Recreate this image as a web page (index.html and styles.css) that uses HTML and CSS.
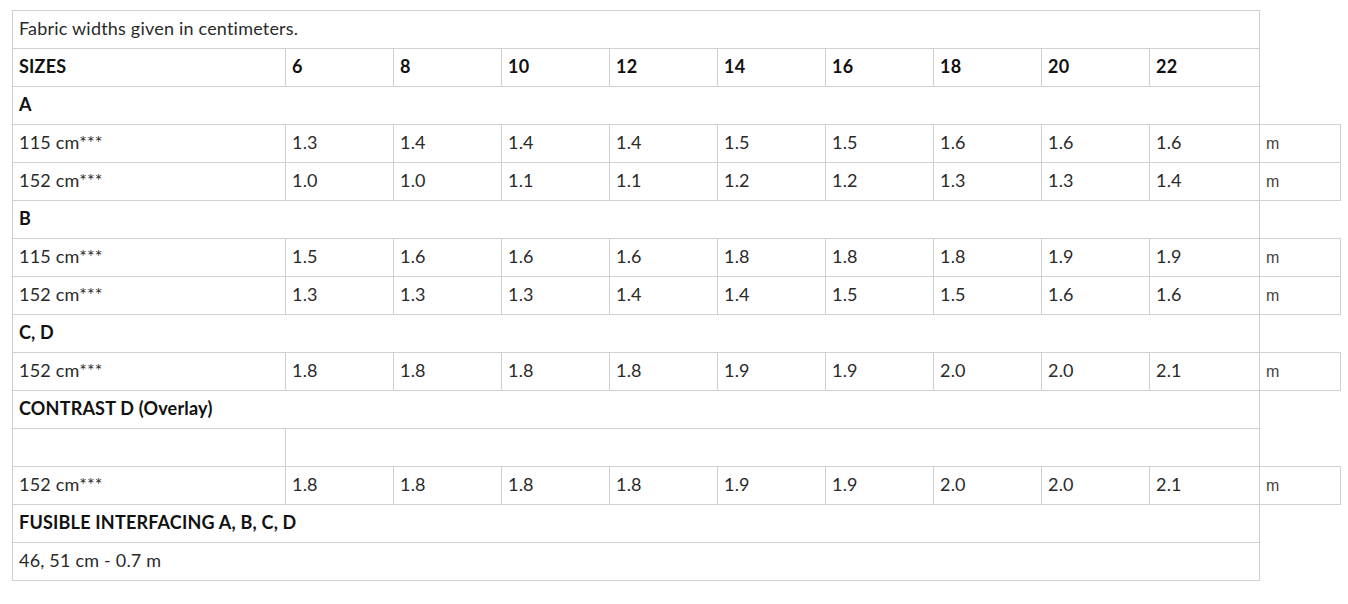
FILE: index.html
```html
<!DOCTYPE html>
<html>
<head>
<meta charset="utf-8">
<link rel="stylesheet" href="styles.css">
</head>
<body>
<div class="wrap">
<table class="chart">
<colgroup>
<col class="c-label"><col class="c-size"><col class="c-size"><col class="c-size"><col class="c-size"><col class="c-size"><col class="c-size"><col class="c-size"><col class="c-size"><col class="c-last"><col class="c-unit">
</colgroup>
<tbody>
<tr><td colspan="10">Fabric widths given in centimeters.</td></tr>
<tr class="head"><td>SIZES</td><td>6</td><td>8</td><td>10</td><td>12</td><td>14</td><td>16</td><td>18</td><td>20</td><td>22</td></tr>
<tr class="head"><td colspan="10">A</td></tr>
<tr><td>115 cm***</td><td>1.3</td><td>1.4</td><td>1.4</td><td>1.4</td><td>1.5</td><td>1.5</td><td>1.6</td><td>1.6</td><td>1.6</td><td class="unit">m</td></tr>
<tr><td>152 cm***</td><td>1.0</td><td>1.0</td><td>1.1</td><td>1.1</td><td>1.2</td><td>1.2</td><td>1.3</td><td>1.3</td><td>1.4</td><td class="unit">m</td></tr>
<tr class="head"><td colspan="10">B</td></tr>
<tr><td>115 cm***</td><td>1.5</td><td>1.6</td><td>1.6</td><td>1.6</td><td>1.8</td><td>1.8</td><td>1.8</td><td>1.9</td><td>1.9</td><td class="unit">m</td></tr>
<tr><td>152 cm***</td><td>1.3</td><td>1.3</td><td>1.3</td><td>1.4</td><td>1.4</td><td>1.5</td><td>1.5</td><td>1.6</td><td>1.6</td><td class="unit">m</td></tr>
<tr class="head"><td colspan="10">C, D</td></tr>
<tr><td>152 cm***</td><td>1.8</td><td>1.8</td><td>1.8</td><td>1.8</td><td>1.9</td><td>1.9</td><td>2.0</td><td>2.0</td><td>2.1</td><td class="unit">m</td></tr>
<tr class="head"><td colspan="10">CONTRAST D (Overlay)</td></tr>
<tr><td></td><td colspan="9"></td></tr>
<tr><td>152 cm***</td><td>1.8</td><td>1.8</td><td>1.8</td><td>1.8</td><td>1.9</td><td>1.9</td><td>2.0</td><td>2.0</td><td>2.1</td><td class="unit">m</td></tr>
<tr class="head"><td colspan="10">FUSIBLE INTERFACING A, B, C, D</td></tr>
<tr><td colspan="10">46, 51 cm - 0.7 m</td></tr>
</tbody>
</table>
</div>
</body>
</html>
```

FILE: styles.css
```css
html, body {
  margin: 0;
  padding: 0;
  background: #ffffff;
}
.wrap {
  padding: 10px 0 0 12px;
}
.chart {
  border-collapse: collapse;
  table-layout: fixed;
  width: 1329px;
  font-family: Lato, "Noto Sans", sans-serif;
  font-size: 18px;
  letter-spacing: 0.2px;
  color: #2a2a2a;
}
.c-label { width: 273px; }
.c-size { width: 108px; }
.c-last { width: 110px; }
.c-unit { width: 81px; }
.chart td {
  border: 1px solid #d0d0d0;
  height: 38px;
  padding: 0 6px 3px;
  vertical-align: middle;
  box-sizing: border-box;
  white-space: nowrap;
}
.head td {
  font-weight: 700;
  color: #111;
}
.chart td.unit {
  font-family: "Liberation Sans", Arial, sans-serif;
  font-size: 16px;
  letter-spacing: 0;
  color: #444;
  padding: 0 6px;
}
```
